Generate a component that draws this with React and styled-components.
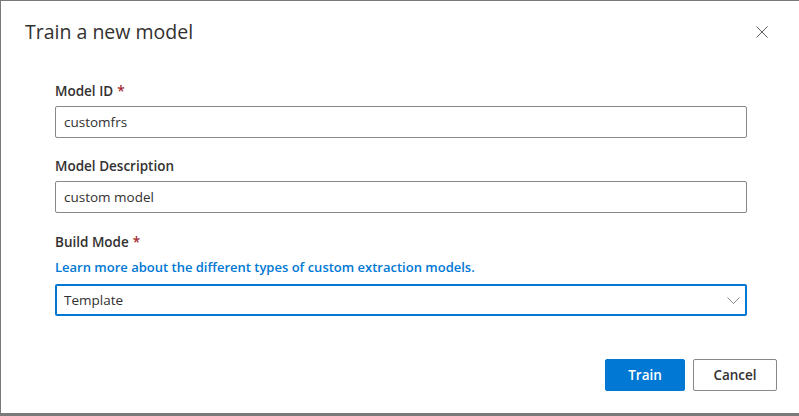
import React from "react";
import styled, { createGlobalStyle } from "styled-components";

const GlobalStyle = createGlobalStyle`
  html, body {
    margin: 0;
    padding: 0;
    background: #7a7a7a;
    overflow: hidden;
  }
  body {
    font-family: "Open Sans", "Noto Sans", sans-serif;
    color: #323130;
  }
`;

const Page = styled.div`
  padding: 1px 0 0 1px;
  height: 416px;
  box-sizing: border-box;
`;

const Dialog = styled.div`
  width: 798px;
  height: 412px;
  background: #ffffff;
  box-sizing: border-box;
  display: flex;
  flex-direction: column;
  padding: 0 22px 0 24px;
`;

const Header = styled.div`
  display: flex;
  align-items: center;
  justify-content: space-between;
  height: 62px;
`;

const Title = styled.h1`
  margin: 0;
  font-size: 19.5px;
  font-weight: 500;
  line-height: 28px;
  color: #323130;
`;

const CloseButton = styled.button`
  width: 32px;
  height: 32px;
  border: none;
  background: transparent;
  padding: 0;
  display: flex;
  align-items: center;
  justify-content: center;
  margin-right: -1px;
  cursor: pointer;
`;

const Body = styled.div`
  padding: 13px 30px 0 30px;
  display: flex;
  flex-direction: column;
`;

const Field = styled.div`
  display: flex;
  flex-direction: column;
  margin-bottom: ${(p) => p.$gap ?? 13}px;
`;

const Label = styled.label`
  font-size: 13.5px;
  font-weight: 600;
  line-height: 20px;
  padding: 5px 0;
  color: #323130;
`;

const Required = styled.span`
  color: #a4262c;
  margin-left: 4px;
`;

const HelpLink = styled.a`
  font-size: 13px;
  font-weight: 600;
  line-height: 20px;
  color: #0078d4;
  text-decoration: none;
  margin-bottom: 7px;
`;

const Input = styled.input`
  height: 32px;
  box-sizing: border-box;
  border: 1px solid #8a8886;
  border-radius: 2px;
  padding: 0 8px;
  font-family: inherit;
  font-size: 13.5px;
  color: #323130;
  outline: none;
`;

const Dropdown = styled.div`
  height: 32px;
  box-sizing: border-box;
  border: 2px solid #0078d4;
  border-radius: 2px;
  padding: 0 5px 0 7px;
  display: flex;
  align-items: center;
  justify-content: space-between;
  font-size: 13.5px;
  color: #323130;
`;

const Footer = styled.div`
  margin-top: auto;
  margin-bottom: 22px;
  display: flex;
  justify-content: flex-end;
  gap: 8px;
`;

const Button = styled.button`
  height: 32px;
  min-width: ${(p) => p.$width}px;
  box-sizing: border-box;
  border-radius: 2px;
  font-family: inherit;
  font-size: 13.5px;
  font-weight: 600;
  padding: 0 16px;
  cursor: pointer;
  border: 1px solid ${(p) => (p.$primary ? "#0078d4" : "#8a8886")};
  background: ${(p) => (p.$primary ? "#0078d4" : "#ffffff")};
  color: ${(p) => (p.$primary ? "#ffffff" : "#323130")};
`;

const CloseIcon = () => (
  <svg width="12" height="12" viewBox="0 0 12 12">
    <path d="M0.5 0.5 L11.5 11.5 M11.5 0.5 L0.5 11.5" stroke="#605e5c" strokeWidth="1" fill="none" />
  </svg>
);

const Chevron = () => (
  <svg width="13" height="7" viewBox="0 0 13 7">
    <path d="M0.5 0.5 L6.5 6.5 L12.5 0.5" stroke="#8a8886" strokeWidth="1" fill="none" />
  </svg>
);

export default function App() {
  return (
    <>
      <GlobalStyle />
      <Page>
        <Dialog>
          <Header>
            <Title>Train a new model</Title>
            <CloseButton aria-label="Close">
              <CloseIcon />
            </CloseButton>
          </Header>
          <Body>
            <Field>
              <Label>
                Model ID<Required>*</Required>
              </Label>
              <Input defaultValue="customfrs" />
            </Field>
            <Field $gap={14}>
              <Label>Model Description</Label>
              <Input defaultValue="custom model" />
            </Field>
            <Field $gap={0}>
              <Label>
                Build Mode<Required>*</Required>
              </Label>
              <HelpLink href="#">
                Learn more about the different types of custom extraction models.
              </HelpLink>
              <Dropdown>
                <span>Template</span>
                <Chevron />
              </Dropdown>
            </Field>
          </Body>
          <Footer>
            <Button $primary $width={80}>Train</Button>
            <Button $width={84}>Cancel</Button>
          </Footer>
        </Dialog>
      </Page>
    </>
  );
}
